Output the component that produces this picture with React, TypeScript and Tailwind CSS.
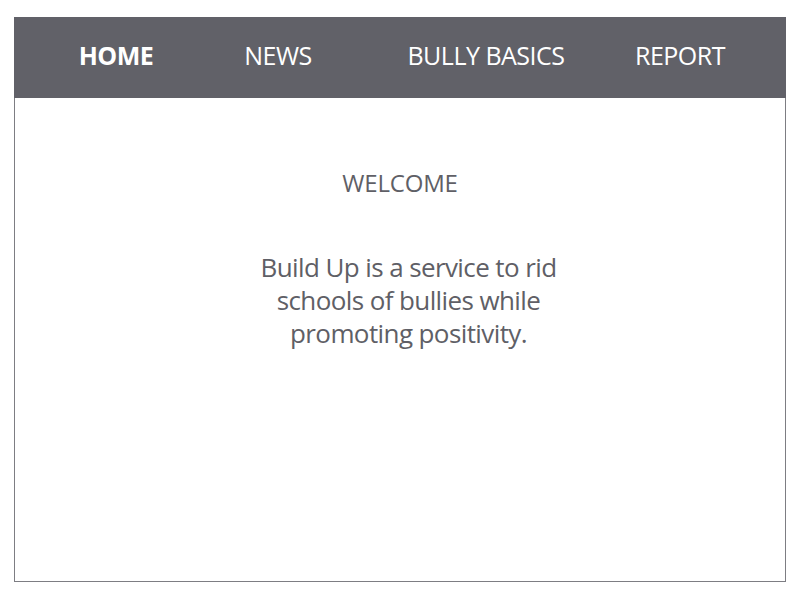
import React from "react"

const navItems = [
  { label: "HOME", width: "w-[160px]", active: true },
  { label: "NEWS", width: "w-[164px]", active: false },
  { label: "BULLY BASICS", width: "w-[252px]", active: false },
  { label: "REPORT", width: "w-[136px]", active: false },
]

export default function App() {
  return (
    <div className="w-[800px] h-[600px] bg-white pt-[17px] px-[14px] font-['Open_Sans',sans-serif]">
      <div className="h-[565px] flex flex-col border-x border-b border-[#7d7d83] bg-white">
        {/* Header nav */}
        <nav className="h-[81px] -mx-px bg-[#616168] flex items-center pl-[22px] pb-[4px]">
          {navItems.map((item) => (
            <div
              key={item.label}
              className={`${item.width} text-center text-white text-[25px] leading-none tracking-[-0.5px] ${
                item.active ? "font-bold" : "font-normal"
              }`}
            >
              {item.label}
            </div>
          ))}
        </nav>

        {/* Content */}
        <main className="flex flex-col items-center text-[#5f5f66] pt-[73px]">
          <h1 className="text-[24px] leading-none tracking-[-0.2px] font-normal">WELCOME</h1>
          <p className="mt-[56px] ml-[17px] w-[330px] text-center text-[26px] leading-[33px] tracking-[-0.6px]">
            Build Up is a service to rid schools of bullies while promoting positivity.
          </p>
        </main>
      </div>
    </div>
  )
}
